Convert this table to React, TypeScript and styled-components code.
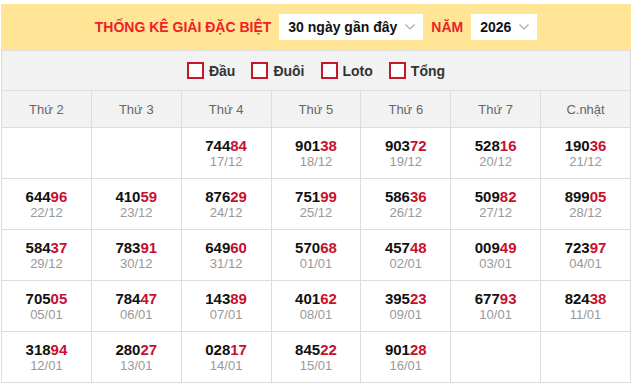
import React from "react";
import styled, { createGlobalStyle } from "styled-components";

const GlobalStyle = createGlobalStyle`
	body {
		margin: 0;
		background: #fff;
		font-family: "Liberation Sans", Arial, sans-serif;
	}
`;

const Wrap = styled.div`
	width: 630px;
	margin: 4px 0 0 1px;
`;

const TopBar = styled.div`
	height: 46px;
	background: #ffe595;
	display: flex;
	align-items: center;
	justify-content: center;
	gap: 8px;
`;

const Title = styled.span`
	color: #ed2028;
	font-weight: bold;
	font-size: 14px;
	text-transform: uppercase;
`;

const Select = styled.div<{ $w: number }>`
	width: ${p => p.$w}px;
	height: 26px;
	box-sizing: border-box;
	background: #fff;
	display: flex;
	align-items: center;
	justify-content: space-between;
	gap: 5px;
	padding: 0 8px 0 9px;
	font-weight: bold;
	font-size: 14px;
	color: #111;
	white-space: nowrap;
`;

const FilterBar = styled.div`
	height: 40px;
	background: #f2f2f2;
	border: 1px solid #dddddd;
	border-bottom: none;
	box-sizing: border-box;
	display: flex;
	align-items: center;
	justify-content: center;
	gap: 16px;
`;

const Check = styled.label`
	display: flex;
	align-items: center;
	gap: 5px;
	font-weight: bold;
	font-size: 14px;
	color: #333;
`;

const Box = styled.span`
	width: 17px;
	height: 17px;
	box-sizing: border-box;
	border: 2px solid #c3182a;
	background: #fff;
`;

const Table = styled.table`
	width: 630px;
	border-collapse: collapse;
	table-layout: fixed;
`;

const Th = styled.th`
	height: 36px;
	background: #f2f2f2;
	border: 1px solid #dddddd;
	font-weight: normal;
	font-size: 13px;
	color: #666;
	padding: 0;
`;

const Td = styled.td`
	height: 50px;
	border: 1px solid #dddddd;
	text-align: center;
	padding: 0;
	vertical-align: middle;
`;

const Num = styled.div`
	font-weight: bold;
	font-size: 15px;
	color: #111;
	line-height: 17px;
`;

const Tail = styled.span`
	color: #c8102e;
`;

const DateText = styled.div`
	font-size: 13px;
	color: #999;
	line-height: 16px;
`;

const Chevron = () => (
	<svg width="10" height="6" viewBox="0 0 10 6">
		<path d="M0.5 0.5 L5 5 L9.5 0.5" fill="none" stroke="#aaa" strokeWidth="1.2" />
	</svg>
);

const days = ["Thứ 2", "Thứ 3", "Thứ 4", "Thứ 5", "Thứ 6", "Thứ 7", "C.nhật"];

const rows: ([string, string] | null)[][] = [
	[null, null, ["74484", "17/12"], ["90138", "18/12"], ["90372", "19/12"], ["52816", "20/12"], ["19036", "21/12"]],
	[["64496", "22/12"], ["41059", "23/12"], ["87629", "24/12"], ["75199", "25/12"], ["58636", "26/12"], ["50982", "27/12"], ["89905", "28/12"]],
	[["58437", "29/12"], ["78391", "30/12"], ["64960", "31/12"], ["57068", "01/01"], ["45748", "02/01"], ["00949", "03/01"], ["72397", "04/01"]],
	[["70505", "05/01"], ["78447", "06/01"], ["14389", "07/01"], ["40162", "08/01"], ["39523", "09/01"], ["67793", "10/01"], ["82438", "11/01"]],
	[["31894", "12/01"], ["28027", "13/01"], ["02817", "14/01"], ["84522", "15/01"], ["90128", "16/01"], null, null],
];

const filters = ["Đầu", "Đuôi", "Loto", "Tổng"];

export default function App() {
	return (
		<Wrap>
			<GlobalStyle />
			<TopBar>
				<Title>Thống kê giải đặc biệt</Title>
				<Select $w={144}>
					30 ngày gần đây <Chevron />
				</Select>
				<Title>Năm</Title>
				<Select $w={66}>
					2026 <Chevron />
				</Select>
			</TopBar>
			<FilterBar>
				{filters.map(f => (
					<Check key={f}>
						<Box />
						{f}
					</Check>
				))}
			</FilterBar>
			<Table>
				<thead>
					<tr>
						{days.map(d => (
							<Th key={d}>{d}</Th>
						))}
					</tr>
				</thead>
				<tbody>
					{rows.map((r, i) => (
						<tr key={i}>
							{r.map((c, j) => (
								<Td key={j}>
									{c && (
										<>
											<Num>
												{c[0].slice(0, 3)}
												<Tail>{c[0].slice(3)}</Tail>
											</Num>
											<DateText>{c[1]}</DateText>
										</>
									)}
								</Td>
							))}
						</tr>
					))}
				</tbody>
			</Table>
		</Wrap>
	);
}
